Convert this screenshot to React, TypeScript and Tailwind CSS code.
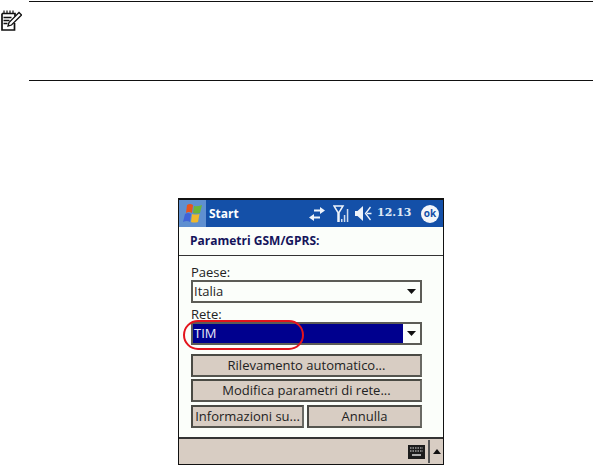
const btn = "flex items-center justify-center border-2 border-[#4a4a44] bg-[#d8cdc3] text-[13px] text-[#222] h-[23px] border-r-[#6a6a64] border-b-[#55554f]";

function Note() {
  return (
    <svg width="21" height="21" viewBox="0 0 21 21" fill="none" stroke="#111" className="shrink-0">
      <path d="M1 3.500h13v3M1 3.500v16.500h12.500v-7" strokeWidth="1.700" />
      <path d="M3 0.500v3M6 0.500v3M9 0.500v3M12 0.500v3" strokeWidth="1.200" />
      <path d="M2.500 7.500h8M2.500 10.500h6M2.500 13.500h4" strokeWidth="1.300" />
      <path d="M7 16l1-3.500 10-10 2.500 2.500-10 10z" strokeWidth="1.300" fill="#fff" />
    </svg>
  );
}

function Flag() {
  return (
    <svg width="22" height="22" viewBox="0 0 22 22">
      <path d="M5 2q3-2 6 0l-1 8q-3-2-6 0z" fill="#e8541c" />
      <path d="M12 3q3 1 8-1l-2 8q-4 1-7 0z" fill="#6cb53a" />
      <path d="M3 11q3-2 6 0l-1 8q-3-2-7 0z" fill="#3f64d8" />
      <path d="M10 11q3 1 7.500 0l-1.500 8q-4 1-7 0z" fill="#f0b92c" />
    </svg>
  );
}

function Status() {
  return (
    <div className="flex items-center text-white">
      <svg width="16" height="14" viewBox="0 0 16 14" className="mr-[8px]" fill="#eef3fa">
        <path d="M5 2.500h6V0l5 3.500-5 3.500V4.500H5zM11 9.500H5V7l-5 3.500L5 14v-2.500h6z" />
      </svg>
      <svg width="17" height="17" viewBox="0 0 17 17" className="mr-[5px]">
        <path d="M1 1h9L6 7.500v9H5v-9z" stroke="#eef3fa" strokeWidth="1.500" fill="#1450a8" />
        <path d="M8 14h1.500v3H8zM10.800 10h1.500v7h-1.500zM13.800 4h1.500v13h-1.500z" fill="#cfdcee" />
      </svg>
      <svg width="17" height="15" viewBox="0 0 17 15" className="mr-[5px]" fill="#eef3fa">
        <path d="M0 5h2.500L8 0v15l-5.500-5H0z" />
        <path d="M15.500 1l-5 6.500 5 6.500M12 7.500h4.500" stroke="#eef3fa" strokeWidth="1.300" fill="none" />
      </svg>
      <span className="text-[11px] font-bold font-['DejaVu_Serif',serif] w-[34px] whitespace-nowrap text-[#dfe8f5]">12.13</span>
    </div>
  );
}

function Select({ selected, label }: { selected?: boolean; label: string }) {
  return (
    <div className="flex h-[23px] border-2 border-[#5c5c56] bg-[#fbfefa] text-[13px] text-[#222]">
      <div className={selected ? "flex-1 flex items-center pl-[1px] bg-[#00008e] text-[#e8e8f8]" : "flex-1 flex items-center pl-[1px]"}>
        {label}
      </div>
      <div className="w-[17px] flex items-center justify-center">
        <svg width="9" height="5" viewBox="0 0 9 5"><path d="M0 0h9L4.500 5z" fill="#111" /></svg>
      </div>
    </div>
  );
}

export default function App() {
  return (
    <div className="w-[593px] h-[465px] bg-white overflow-hidden font-['Liberation_Sans',sans-serif]">
      <div className="flex items-start pt-[1px]">
        <div className="pt-[9px] pl-[1px] w-[29px]"><Note /></div>
        <div className="flex-1 h-[80px] border-y border-[#111]" />
      </div>

      <div className="relative mt-[117px] ml-[178px] w-[266px] h-[267px] border border-t-2 border-[#111] bg-[#fbfefa] flex flex-col font-['Open_Sans','DejaVu_Sans',sans-serif]">
        <div className="h-[27px] bg-[#1450a8] flex items-center text-white shrink-0">
          <div className="w-[27px] h-[27px] bg-[#5f90d0] flex items-center justify-center"><Flag /></div>
          <span className="ml-[3px] text-[12px] font-bold">Start</span>
          <div className="ml-auto flex items-center">
            <Status />
            <div className="w-[18px] h-[18px] ml-[10px] mr-[4px] rounded-full bg-[#f4f6fa] text-[#1450a8] text-[10px] font-bold flex items-center justify-center">ok</div>
          </div>
        </div>
        <div className="h-[29px] flex items-center pl-[11px] text-[12px] font-bold text-[#14145a] border-b border-[#333] shrink-0">
          Parametri GSM/GPRS:
        </div>
        <div className="flex-1 pl-[12px] pt-[8px] text-[13px] text-[#222]">
          <div className="w-[231px]">
            <div className="leading-[16px]">Paese:</div>
            <Select label="Italia" />
            <div className="leading-[16px] mt-[3px]">Rete:</div>
            <Select selected label="TIM" />
            <div className="mt-[9px] flex flex-col gap-[2px]">
              <div className={btn}>Rilevamento automatico...</div>
              <div className={btn}>Modifica parametri di rete...</div>
              <div className="flex gap-[3px] mt-[1px]">
                <div className={btn + " w-[113px]"}>Informazioni su...</div>
                <div className={btn + " flex-1"}>Annulla</div>
              </div>
            </div>
          </div>
        </div>
        <div className="h-[27px] bg-[#d8cdc3] border-t-2 border-[#333] flex items-center justify-end shrink-0">
          <svg width="17" height="14" viewBox="0 0 17 14" className="mr-[3px]">
            <rect x="0" y="0" width="17" height="14" fill="#1c1c1c" />
            <path d="M2 3h13M2 6h13" stroke="#ddd" strokeWidth="1.200" strokeDasharray="1.500 1" />
            <path d="M4 10h9" stroke="#ddd" strokeWidth="1.500" />
          </svg>
          <div className="h-[23px] border-l-2 border-[#555] w-[15px] flex items-center justify-center">
            <svg width="8" height="5" viewBox="0 0 8 5"><path d="M0 5h8L4 0z" fill="#111" /></svg>
          </div>
        </div>
        <div className="absolute left-[4px] top-[120px] w-[121px] h-[30px] rounded-[15px] border-2 border-[#e3141c]" />
      </div>
    </div>
  );
}
